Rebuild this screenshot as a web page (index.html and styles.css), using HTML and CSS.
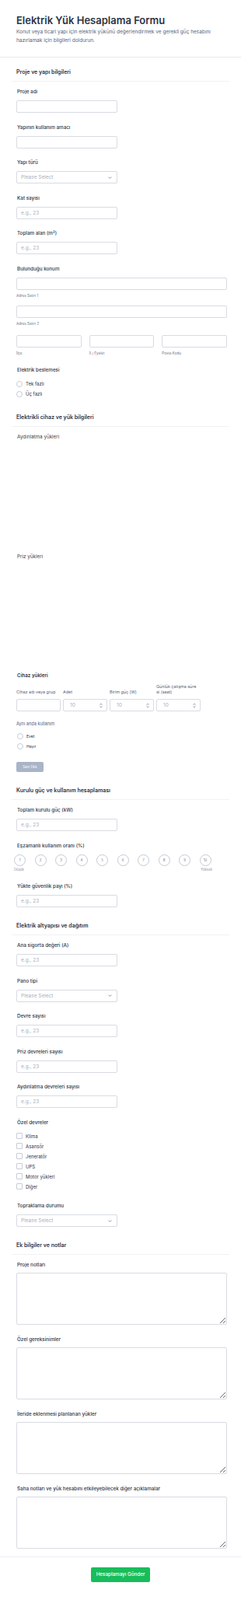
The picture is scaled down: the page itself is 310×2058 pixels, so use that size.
FILE: index.html
```html
<!DOCTYPE html>
<html lang="tr">
<head>
<meta charset="utf-8">
<title>Elektrik Yük Hesaplama Formu</title>
<link rel="stylesheet" href="styles.css">
</head>
<body>
<div class="page">
  <header class="form-header">
    <h1 class="form-title">Elektrik Yük Hesaplama Formu</h1>
    <p class="form-sub">Konut veya ticari yapı için elektrik yükünü değerlendirmek ve gerekli güç hesabını hazırlamak için bilgileri doldurun.</p>
  </header>

  <section class="sec sec-first">
    <h2 class="sec-title">Proje ve yapı bilgileri</h2>
    <div class="field"><label class="lbl">Proje adı</label><input class="inp half" type="text"></div>
    <div class="field"><label class="lbl">Yapının kullanım amacı</label><input class="inp half" type="text"></div>
    <div class="field"><label class="lbl">Yapı türü</label>
      <div class="sel half"><span class="ph">Please Select</span>
        <svg class="chev" viewBox="0 0 8 5" width="5" height="3"><path d="M1 1l3 3 3-3" fill="none" stroke="#6b7385" stroke-width="1.3"/></svg></div></div>
    <div class="field"><label class="lbl">Kat sayısı</label><input class="inp half" type="text" placeholder="e.g., 23"></div>
    <div class="field"><label class="lbl">Toplam alan (m²)</label><input class="inp half" type="text" placeholder="e.g., 23"></div>
    <div class="field"><label class="lbl">Bulunduğu konum</label>
      <input class="inp full" type="text"><div class="sub">Adres Satırı 1</div>
      <input class="inp full addr2" type="text"><div class="sub">Adres Satırı 2</div>
      <div class="addr-row">
        <div><input class="inp full" type="text"><div class="sub">İlçe</div></div>
        <div><input class="inp full" type="text"><div class="sub">İl / Eyalet</div></div>
        <div><input class="inp full" type="text"><div class="sub">Posta Kodu</div></div>
      </div>
    </div>
    <div class="field"><label class="lbl">Elektrik beslemesi</label>
      <ul class="opts">
        <li class="opt"><span class="radio"></span>Tek fazlı</li>
        <li class="opt"><span class="radio"></span>Üç fazlı</li>
      </ul>
    </div>
  </section>

  <section class="sec">
    <h2 class="sec-title">Elektrikli cihaz ve yük bilgileri</h2>
    <div class="widget w1"><div class="lbl-light">Aydınlatma yükleri</div></div>
    <div class="widget w2"><div class="lbl-light">Priz yükleri</div></div>
    <div class="field field-dev">
      <label class="lbl">Cihaz yükleri</label>
      <div class="dev-grid">
        <div class="colh">Cihaz adı veya grup</div>
        <div class="colh">Adet</div>
        <div class="colh">Birim güç (W)</div>
        <div class="colh">Günlük çalışma süre<br>si (saat)</div>
        <input class="inp full" type="text">
        <div class="num"><span class="ph">10</span><svg class="spin" viewBox="0 0 6 10" width="4" height="7"><path d="M1 3.5l2-2 2 2M1 6.5l2 2 2-2" fill="none" stroke="#4b5366" stroke-width="1"/></svg></div>
        <div class="num"><span class="ph">10</span><svg class="spin" viewBox="0 0 6 10" width="4" height="7"><path d="M1 3.5l2-2 2 2M1 6.5l2 2 2-2" fill="none" stroke="#4b5366" stroke-width="1"/></svg></div>
        <div class="num"><span class="ph">10</span><svg class="spin" viewBox="0 0 6 10" width="4" height="7"><path d="M1 3.5l2-2 2 2M1 6.5l2 2 2-2" fill="none" stroke="#4b5366" stroke-width="1"/></svg></div>
      </div>
      <div class="sublbl">Aynı anda kullanım</div>
      <ul class="opts opts-sm">
        <li class="opt"><span class="radio"></span>Evet</li>
        <li class="opt"><span class="radio"></span>Hayır</li>
      </ul>
      <button class="addrow" type="button">Satır Ekle</button>
    </div>
  </section>

  <section class="sec">
    <h2 class="sec-title">Kurulu güç ve kullanım hesaplaması</h2>
    <div class="field"><label class="lbl">Toplam kurulu güç (kW)</label><input class="inp half" type="text" placeholder="e.g., 23"></div>
    <div class="field"><label class="lbl">Eşzamanlı kullanım oranı (%)</label>
      <div class="scale">
        <div class="dots">
          <span class="dot">1</span><span class="dot">2</span><span class="dot">3</span><span class="dot">4</span><span class="dot">5</span><span class="dot">6</span><span class="dot">7</span><span class="dot">8</span><span class="dot">9</span><span class="dot">10</span>
        </div>
        <div class="ends"><span>Düşük</span><span>Yüksek</span></div>
      </div>
    </div>
    <div class="field"><label class="lbl">Yükte güvenlik payı (%)</label><input class="inp half" type="text" placeholder="e.g., 23"></div>
  </section>

  <section class="sec">
    <h2 class="sec-title">Elektrik altyapısı ve dağıtım</h2>
    <div class="field"><label class="lbl">Ana sigorta değeri (A)</label><input class="inp half" type="text" placeholder="e.g., 23"></div>
    <div class="field"><label class="lbl">Pano tipi</label>
      <div class="sel half"><span class="ph">Please Select</span>
        <svg class="chev" viewBox="0 0 8 5" width="5" height="3"><path d="M1 1l3 3 3-3" fill="none" stroke="#6b7385" stroke-width="1.3"/></svg></div></div>
    <div class="field"><label class="lbl">Devre sayısı</label><input class="inp half" type="text" placeholder="e.g., 23"></div>
    <div class="field"><label class="lbl">Priz devreleri sayısı</label><input class="inp half" type="text" placeholder="e.g., 23"></div>
    <div class="field"><label class="lbl">Aydınlatma devreleri sayısı</label><input class="inp half" type="text" placeholder="e.g., 23"></div>
    <div class="field"><label class="lbl">Özel devreler</label>
      <ul class="opts opts-chk">
        <li class="opt"><span class="check"></span>Klima</li>
        <li class="opt"><span class="check"></span>Asansör</li>
        <li class="opt"><span class="check"></span>Jeneratör</li>
        <li class="opt"><span class="check"></span>UPS</li>
        <li class="opt"><span class="check"></span>Motor yükleri</li>
        <li class="opt"><span class="check"></span>Diğer</li>
      </ul>
    </div>
    <div class="field"><label class="lbl">Topraklama durumu</label>
      <div class="sel half"><span class="ph">Please Select</span>
        <svg class="chev" viewBox="0 0 8 5" width="5" height="3"><path d="M1 1l3 3 3-3" fill="none" stroke="#6b7385" stroke-width="1.3"/></svg></div></div>
  </section>

  <section class="sec">
    <h2 class="sec-title">Ek bilgiler ve notlar</h2>
    <div class="field tfield"><label class="lbl">Proje notları</label><textarea class="ta"></textarea></div>
    <div class="field tfield"><label class="lbl">Özel gereksinimler</label><textarea class="ta"></textarea></div>
    <div class="field tfield"><label class="lbl">İleride eklenmesi planlanan yükler</label><textarea class="ta"></textarea></div>
    <div class="field tfield tlast"><label class="lbl">Saha notları ve yük hesabını etkileyebilecek diğer açıklamalar</label><textarea class="ta"></textarea></div>
  </section>

  <footer class="form-footer">
    <button class="submit" type="button">Hesaplamayı Gönder</button>
  </footer>
</div>
</body>
</html>
```

FILE: styles.css
```css
* { box-sizing: border-box; }
html, body { margin: 0; padding: 0; background: #ffffff; }
body {
  font-family: Inter, "Noto Sans", "Liberation Sans", sans-serif;
  color: #2c3345;
}
.page { width: 310px; }

.form-header {
  padding: 18px 12px 15.5px 21px;
  border-bottom: 1px solid #e6e8ee;
}
.form-title {
  margin: 0;
  font-size: 13px;
  line-height: 16px;
  font-weight: 600;
  color: #2c3345;
  letter-spacing: 0;
}
.form-sub {
  margin: 1.5px 0 0;
  font-size: 6.5px;
  line-height: 11px;
  color: #57647e;
}

.sec { display: flow-root; margin: 5.5px 15px 0; }
.sec-first { margin-top: 14px; }
.sec-title {
  margin: 0;
  padding: 0 6px 6px;
  font-size: 7px;
  line-height: 10px;
  font-weight: 600;
  color: #2c3345;
  border-bottom: 1px solid #f1f2f5;
}
.sec-title + .field, .sec-title + .widget { margin-top: 8px; }

.field { padding: 0 3px 0 6px; margin-bottom: 13.5px; }
.lbl {
  display: block;
  margin: 0 0 6px 1px;
  font-size: 6.3px;
  line-height: 10px;
  font-weight: 500;
  color: #2c3345;
}
.inp, .sel, .num {
  display: block;
  height: 16px;
  margin: 0;
  padding: 0 5px;
  border: 1px solid #d8dbe3;
  border-radius: 2px;
  background: #fff;
  font-family: inherit;
  font-size: 6.5px;
  color: #2c3345;
  outline: none;
}
.inp::placeholder { color: #a9afbc; }
.half { width: 130px; }
.full { width: 100%; }
.sel { display: flex; align-items: center; justify-content: space-between; padding: 0 5px 0 5px; }
.ph { font-size: 6.5px; color: #a9afbc; }
.chev { display: block; margin-right: 1px; }

.sub {
  margin-top: 4px;
  font-size: 4.6px;
  line-height: 7px;
  color: #6f7789;
}
.addr2 { margin-top: 9.5px; }
.addr-row {
  display: grid;
  grid-template-columns: 1fr 1fr 1fr;
  column-gap: 10px;
  margin-top: 10.5px;
}

.opts { list-style: none; margin: 4px 0 0; padding: 0; }
.opt {
  display: flex;
  align-items: center;
  height: 13px;
  font-size: 6px;
  color: #2c3345;
}
.radio {
  width: 8px; height: 8px;
  margin-right: 4px;
  border: 1px solid #c7ccd6;
  border-radius: 50%;
  background: #fff;
  flex: none;
}
.check {
  width: 8px; height: 8px;
  margin-right: 4px;
  border: 1px solid #c7ccd6;
  border-radius: 1px;
  background: #fff;
  flex: none;
}
.opts-chk { margin-top: 2.5px; }

.widget { padding: 0 3px 0 6px; }
.w1 { height: 154px; }
.w2 { height: 153px; }
.lbl-light {
  margin-left: 1px;
  font-size: 6.3px;
  line-height: 10px;
  font-weight: 400;
  color: #3d3f48;
}

.field-dev .lbl { margin-bottom: 5.5px; font-weight: 600; }
.dev-grid {
  display: grid;
  grid-template-columns: repeat(4, 57px);
  column-gap: 3px;
  row-gap: 5.5px;
  align-items: end;
}
.colh {
  font-size: 5.4px;
  line-height: 7px;
  color: #57647e;
}
.num {
  display: flex;
  align-items: center;
  justify-content: space-between;
  padding: 0 5px 0 8px;
}
.spin { display: block; }
.sublbl {
  margin-top: 12px;
  font-size: 5.6px;
  line-height: 8px;
  color: #57647e;
}
.opts-sm { margin-top: 5.5px; }
.opts-sm .opt { font-size: 5px; }
.opts-sm .radio { margin-left: 1px; }
.addrow {
  display: block;
  margin: 13.5px 0 12px;
  width: 35px;
  height: 13px;
  padding: 0;
  border: 0;
  border-radius: 2px;
  background: #a9b4c8;
  color: #ffffff;
  font-family: inherit;
  font-size: 4.2px;
}

.scale { width: 255px; margin-left: -3px; }
.dots { display: flex; gap: 11.5px; }
.dot {
  width: 15px; height: 15px;
  border: 1px solid #c4c9d3;
  border-radius: 50%;
  display: flex; align-items: center; justify-content: center;
  font-size: 4.3px;
  color: #6f7789;
  flex: none;
}
.ends {
  display: flex;
  justify-content: space-between;
  margin-top: 2px;
  font-size: 4.3px;
  line-height: 6px;
  color: #8a92a3;
}

.tfield { margin-bottom: 14px; }
.tfield .lbl { margin-bottom: 5px; }
.tlast { margin-bottom: 10px; }
.ta {
  display: block;
  width: 100%;
  height: 67px;
  margin: 0;
  border: 1px solid #d8dbe3;
  border-radius: 2px;
  font-family: inherit;
  font-size: 6.5px;
  resize: vertical;
}

.form-footer {
  border-top: 1px solid #eceef2;
  padding: 12.5px 0 17px;
  display: flex;
  justify-content: center;
}
.submit {
  width: 76px;
  height: 19px;
  padding: 0;
  border: 0;
  border-radius: 2px;
  background: #18bd5b;
  color: #ffffff;
  font-family: inherit;
  font-size: 6.3px;
  font-weight: 500;
}
```
